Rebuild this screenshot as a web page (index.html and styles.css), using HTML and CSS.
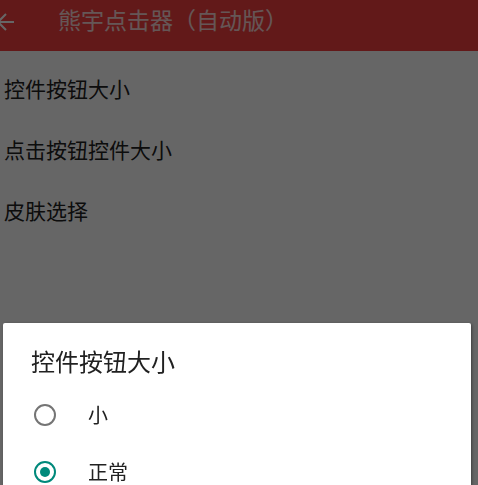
FILE: index.html
```html
<!DOCTYPE html>
<html lang="zh-CN">
<head>
  <meta charset="UTF-8" />
  <title>熊宇点击器（自动版）</title>
  <link rel="stylesheet" href="styles.css">
</head>
<body>
  <div class="toolbar">
    <svg class="back" width="20" height="20" viewBox="0 0 20 20">
      <path d="M14 10H-2M6 2L-2 10L6 18" fill="none" stroke="#fff" stroke-width="2" />
    </svg>
    <span class="title">熊宇点击器（自动版）</span>
  </div>

  <ul class="settings">
    <li>控件按钮大小</li>
    <li>点击按钮控件大小</li>
    <li>皮肤选择</li>
  </ul>

  <div class="scrim"></div>

  <div class="dialog">
    <h3>控件按钮大小</h3>
    <label class="option">
      <span class="radio"></span>
      <span>小</span>
    </label>
    <label class="option">
      <span class="radio checked"></span>
      <span>正常</span>
    </label>
  </div>
</body>
</html>
```

FILE: styles.css
```css
body {
  margin: 0;
  width: 478px;
  height: 485px;
  overflow: hidden;
  font-family: "Noto Sans CJK SC", "Noto Sans", sans-serif;
  background: #fff;
  color: #212121;
}

.toolbar {
  height: 51px;
  background: #f54040;
  display: flex;
  align-items: center;
  padding-bottom: 2px;
  box-sizing: border-box;
}

.back {
  margin-top: -5px;
  flex: none;
}

.title {
  margin-left: 38px;
  margin-top: -12px;
  font-size: 23px;
  color: #fff;
  opacity: 0.8;
}

.settings {
  list-style: none;
  margin: 0;
  padding: 7px 0 0 4px;
}

.settings li {
  height: 61px;
  line-height: 61px;
  font-size: 21px;
}

.scrim {
  position: fixed;
  inset: 0;
  background: rgba(0, 0, 0, 0.6);
}

.dialog {
  position: absolute;
  left: 3px;
  right: 7px;
  top: 323px;
  bottom: 0;
  overflow: hidden;
  background: #fff;
  border-radius: 2px 2px 0 0;
  box-shadow: 1px 1px 3px rgba(0, 0, 0, 0.4);
}

.dialog h3 {
  margin: 0;
  padding: 22px 0 0 28px;
  font-size: 24px;
  font-weight: normal;
  line-height: 32px;
  color: #212121;
}

.option {
  display: flex;
  align-items: center;
  height: 57px;
  padding-left: 31px;
  font-size: 20px;
  color: #212121;
}

.option:first-of-type {
  margin-top: 9px;
}

.radio {
  width: 18px;
  height: 18px;
  border: 2.5px solid #757575;
  border-radius: 50%;
  margin-right: 32px;
  position: relative;
  flex: none;
}

.radio.checked {
  border-color: #00897b;
}

.radio.checked::after {
  content: "";
  position: absolute;
  left: 4px;
  top: 4px;
  width: 10px;
  height: 10px;
  border-radius: 50%;
  background: #00897b;
}
```
